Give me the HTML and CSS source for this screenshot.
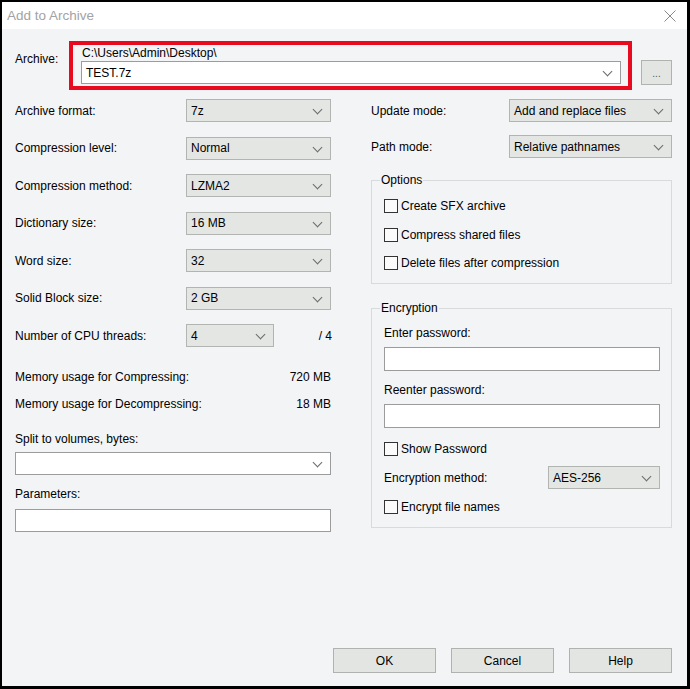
FILE: index.html
```html
<!DOCTYPE html>
<html lang="en">
<head>
  <meta charset="UTF-8">
  <title>Add to Archive</title>
  <link rel="stylesheet" href="styles.css">
</head>
<body>
  <div class="window">
    <div class="titlebar">
      <span class="title">Add to Archive</span>
      <svg class="close" width="12" height="12" viewBox="0 0 12 12">
        <path d="M0.5 0.5 L11.5 11.5 M11.5 0.5 L0.5 11.5" stroke="#8a8a8a" stroke-width="1" fill="none"/>
      </svg>
    </div>

    <div class="main">
      <!-- archive name -->
      <div class="archive-row">
        <span class="archive-label">Archive:</span>
        <div class="archive-box">
          <div class="archive-path">C:\Users\Admin\Desktop\</div>
          <div class="combo combo-white">TEST.7z</div>
        </div>
        <div class="btn btn-browse">...</div>
      </div>

      <div class="columns">
        <div class="col-left">
          <div class="field-row">
            <span class="field-label">Archive format:</span>
            <div class="combo">7z</div>
          </div>
          <div class="field-row">
            <span class="field-label">Compression level:</span>
            <div class="combo">Normal</div>
          </div>
          <div class="field-row">
            <span class="field-label">Compression method:</span>
            <div class="combo">LZMA2</div>
          </div>
          <div class="field-row">
            <span class="field-label">Dictionary size:</span>
            <div class="combo">16 MB</div>
          </div>
          <div class="field-row">
            <span class="field-label">Word size:</span>
            <div class="combo">32</div>
          </div>
          <div class="field-row">
            <span class="field-label">Solid Block size:</span>
            <div class="combo">2 GB</div>
          </div>
          <div class="field-row">
            <span class="field-label">Number of CPU threads:</span>
            <div class="combo combo-cpu">4</div>
            <span class="cpu-max">/ 4</span>
          </div>

          <div class="stats">
            <div class="stat-row"><span>Memory usage for Compressing:</span><span>720 MB</span></div>
            <div class="stat-row"><span>Memory usage for Decompressing:</span><span>18 MB</span></div>
          </div>

          <div class="block-label split-label">Split to volumes, bytes:</div>
          <div class="combo combo-white combo-split"></div>

          <div class="block-label params-label">Parameters:</div>
          <div class="edit params-edit"></div>
        </div>

        <div class="col-right">
          <div class="field-row">
            <span class="field-label right-label">Update mode:</span>
            <div class="combo combo-right">Add and replace files</div>
          </div>
          <div class="field-row path-row">
            <span class="field-label right-label">Path mode:</span>
            <div class="combo combo-right">Relative pathnames</div>
          </div>

          <fieldset class="group options-group">
            <legend>Options</legend>
            <div class="check-row"><span class="check"></span>Create SFX archive</div>
            <div class="check-row"><span class="check"></span>Compress shared files</div>
            <div class="check-row"><span class="check"></span>Delete files after compression</div>
          </fieldset>

          <fieldset class="group encryption-group">
            <legend>Encryption</legend>
            <div class="block-label">Enter password:</div>
            <div class="edit pass-edit"></div>
            <div class="block-label reenter-label">Reenter password:</div>
            <div class="edit pass-edit"></div>
            <div class="check-row show-row"><span class="check"></span>Show Password</div>
            <div class="field-row method-row">
              <span class="field-label method-label">Encryption method:</span>
              <div class="combo combo-method">AES-256</div>
            </div>
            <div class="check-row names-row"><span class="check"></span>Encrypt file names</div>
          </fieldset>
        </div>
      </div>

      <div class="buttons">
        <div class="btn btn-dialog">OK</div>
        <div class="btn btn-dialog">Cancel</div>
        <div class="btn btn-dialog">Help</div>
      </div>
    </div>
  </div>
</body>
</html>
```

FILE: styles.css
```css
* {
  margin: 0;
  padding: 0;
  box-sizing: border-box;
}

body {
  font-family: "Liberation Sans", Arial, sans-serif;
  font-size: 12px;
  line-height: 14px;
  color: #000;
  background: #000;
}

.window {
  width: 690px;
  height: 689px;
  border: 2px solid #000;
  border-right-width: 3px;
  border-bottom-width: 3px;
  background: #f3f4f6;
  display: flex;
  flex-direction: column;
}

/* title bar */
.titlebar {
  height: 27px;
  background: #fff;
  display: flex;
  align-items: center;
  justify-content: space-between;
  padding: 0 11px 0 5px;
}

.title {
  font-size: 13.5px;
  color: #a3a3a3;
}

.close {
  display: block;
}

.main {
  flex: 1;
  display: flex;
  flex-direction: column;
  padding: 12px 15px 13px 13px;
}

/* archive row */
.archive-row {
  display: flex;
  align-items: flex-start;
}

.archive-label {
  width: 54px;
  padding-top: 11px;
}

.archive-box {
  width: 563px;
  border: 4px solid #ea0a20;
  padding: 1px 7px 2px 8px;
}

.archive-path {
  padding-left: 1px;
  margin-bottom: 1px;
}

.btn {
  background: #e3e5e3;
  border: 1px solid #b0b2b0;
  display: flex;
  align-items: center;
  justify-content: center;
}

.btn-browse {
  width: 31px;
  height: 25px;
  margin-left: 9px;
  margin-top: 19px;
  font-size: 10px;
  color: #555;
  padding-top: 2px;
}

/* combos and edits */
.combo {
  position: relative;
  height: 23px;
  width: 145px;
  background: #e4e6e4;
  border: 1px solid #b2b4b2;
  padding-left: 4px;
  display: flex;
  align-items: center;
}

.combo::after {
  content: "";
  position: absolute;
  right: 9px;
  top: 6px;
  width: 6px;
  height: 6px;
  border-right: 1px solid #6a6a6a;
  border-bottom: 1px solid #6a6a6a;
  transform: rotate(45deg);
}

.combo-white {
  background: #fff;
  border-color: #9c9c9c;
  width: auto;
}

.edit {
  height: 23px;
  background: #fff;
  border: 1px solid #9c9c9c;
}

/* layout columns */
.columns {
  display: grid;
  grid-template-columns: 316px 301px;
  column-gap: 40px;
  margin-top: 9px;
}

.col-left,
.col-right {
  display: flex;
  flex-direction: column;
}

.field-row {
  display: flex;
  align-items: center;
  height: 23px;
}

.field-row + .field-row {
  margin-top: 14.5px;
}

.field-label {
  width: 171px;
  flex-shrink: 0;
}

.combo-cpu {
  width: 88px;
}

.cpu-max {
  margin-left: auto;
  margin-right: -1px;
}

.stats {
  margin-top: 23px;
}

.stat-row {
  display: flex;
  justify-content: space-between;
}

.stat-row + .stat-row {
  margin-top: 13px;
}

.split-label {
  margin-top: 21px;
}

.combo-split {
  margin-top: 6px;
}

.params-label {
  margin-top: 12px;
}

.params-edit {
  margin-top: 8px;
}

/* right column */
.right-label {
  width: 138px;
}

.combo-right {
  width: 163px;
}

.col-right .path-row {
  margin-top: 13px;
}

.group {
  border: 1px solid #d8dbde;
  padding: 9px 11px 10px 12px;
  min-width: 0;
}

.group legend {
  padding: 0 1px;
  margin-left: -4px;
  line-height: 14px;
}

.options-group {
  margin-top: 15px;
}

.encryption-group {
  margin-top: 17px;
  padding-top: 11px;
}

.check-row {
  display: flex;
  align-items: center;
  height: 20px;
}

.check-row + .check-row {
  margin-top: 8.5px;
}

.check {
  width: 14px;
  height: 14px;
  border: 1px solid #333;
  background: #fbfbfb;
  margin-right: 3px;
}

.pass-edit {
  height: 24px;
  margin-top: 7px;
}

.reenter-label {
  margin-top: 12px;
}

.show-row {
  margin-top: 11px;
}

.group .method-row {
  margin-top: 7px;
}

.method-label {
  width: 164px;
}

.combo-method {
  width: 112px;
}

.group .names-row {
  margin-top: 8px;
}

/* dialog buttons */
.buttons {
  margin-top: auto;
  display: flex;
  justify-content: flex-end;
  gap: 15px;
}

.btn-dialog {
  width: 103px;
  height: 25px;
}
```
